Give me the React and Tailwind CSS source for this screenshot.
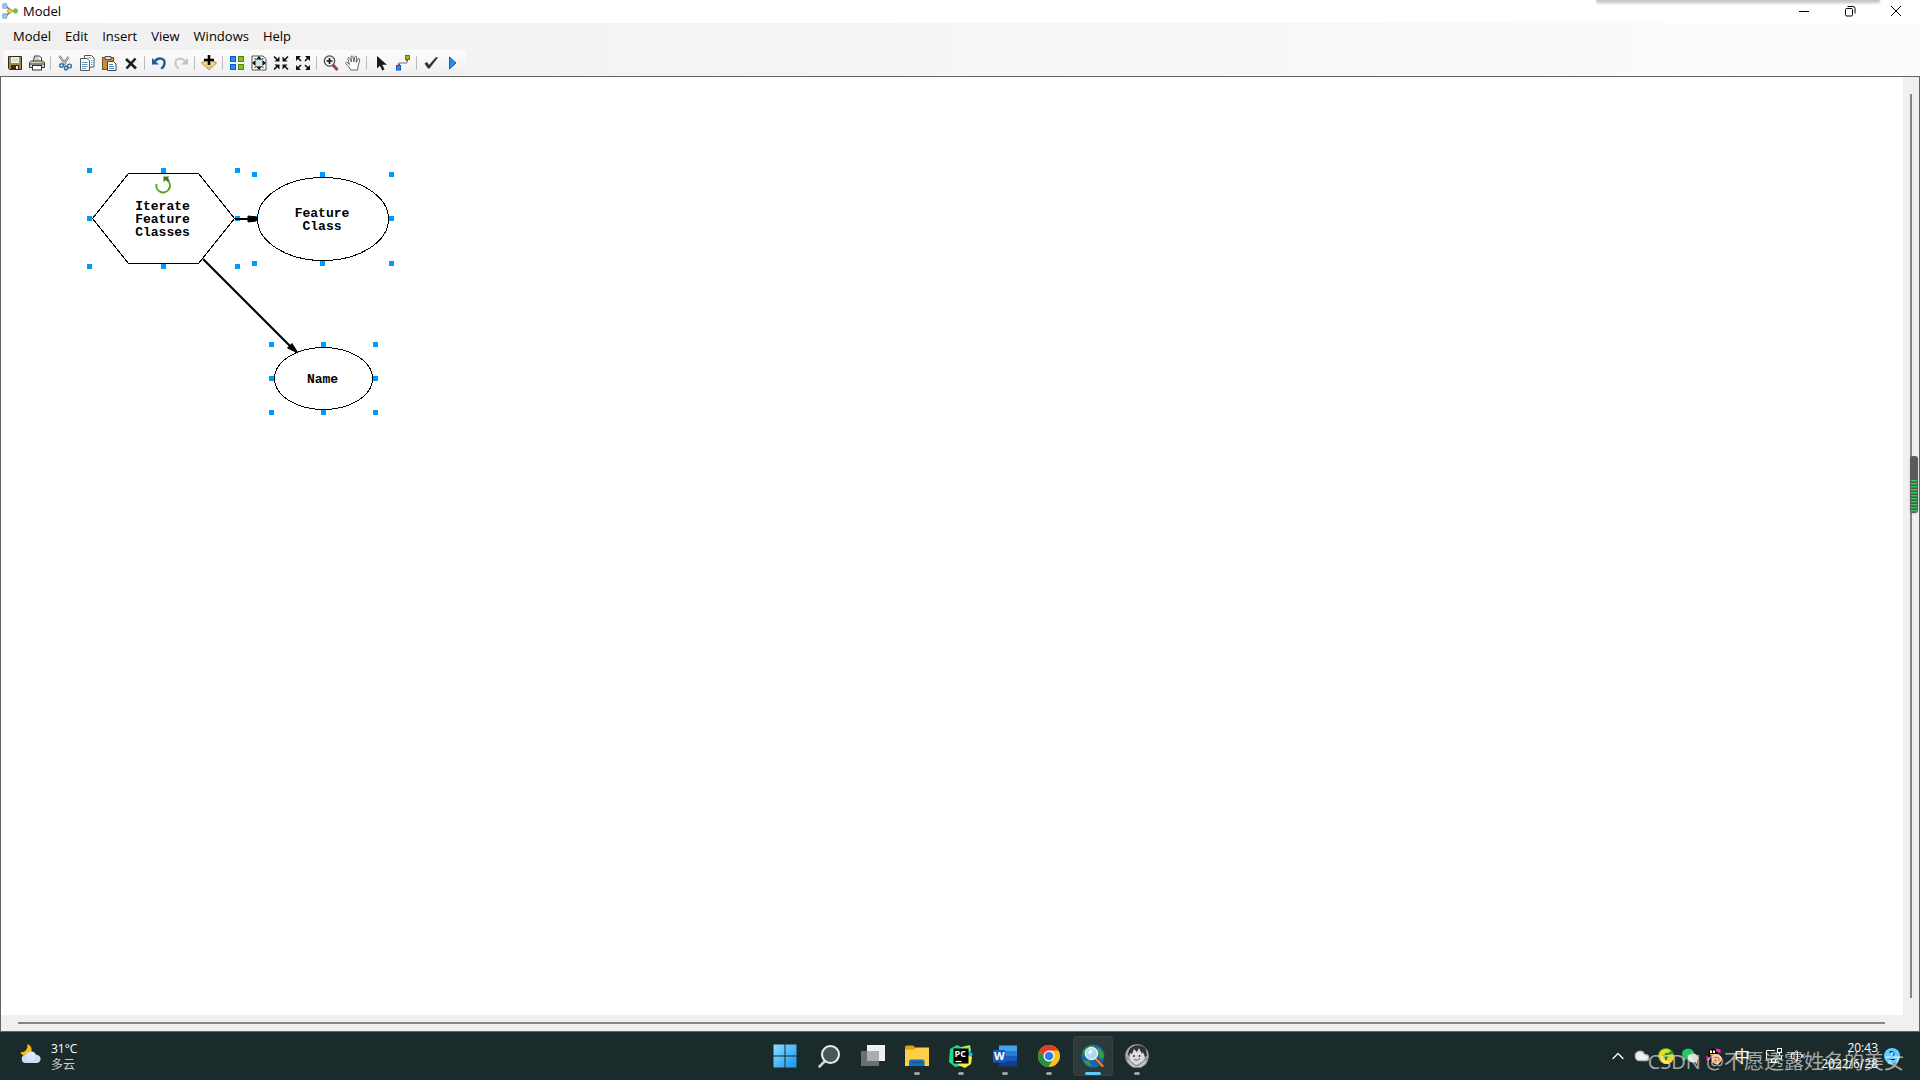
import { Cloud, ChevronUp, VolumeX } from 'lucide-react'

/* ---------- title bar ---------- */

function ModelIcon() {
  return (
    <svg className="h-4 w-4" viewBox="0 0 16 16">
      <path d="M4 3l4 4M4 13l4-4M9 8h3" stroke="#555" strokeWidth="1.2" fill="none" />
      <rect x="0.5" y="0.5" width="4.5" height="5" rx="1" fill="#8fc3f0" stroke="#6ca4d8" strokeWidth="0.6" />
      <rect x="0.5" y="10.5" width="4.5" height="5" rx="1" fill="#8fc3f0" stroke="#6ca4d8" strokeWidth="0.6" />
      <path d="M7.5 5l3.2 3-3.2 3-2.6-3z" fill="#f5c83a" stroke="#b98a12" strokeWidth="0.7" />
      <circle cx="13.5" cy="8" r="2.4" fill="#6cc04a" stroke="#8fcf74" strokeWidth="0.6" />
    </svg>
  )
}

function WindowButton({ label, children }) {
  return (
    <button type="button" aria-label={label} className="flex h-full w-[46px] items-center justify-center pb-0.5">
      <svg className="h-3 w-3" viewBox="0 0 12 12" fill="none" stroke="#000">
        {children}
      </svg>
    </button>
  )
}

function TitleBar() {
  return (
    <header className="relative flex h-[23px] shrink-0 items-center justify-between bg-white">
      <div className="flex items-center gap-[5px] pb-0.5 pl-0.5">
        <ModelIcon />
        <h1 className="text-[13px] leading-4">Model</h1>
      </div>
      {/* edge of a panel docked above the screen */}
      <div className="absolute top-0 right-10 h-0.5 w-[284px] rounded-b bg-[#c8c8c8] shadow-[0_1px_3px_rgba(0,0,0,0.3)]" />
      <div className="flex h-full pr-px">
        <WindowButton label="Minimize">
          <path d="M1 6.5h10" />
        </WindowButton>
        <WindowButton label="Restore">
          <rect x="1.5" y="3.5" width="7" height="7.5" rx="1.2" />
          <path d="M3.5 1.5h5.5a2 2 0 0 1 2 2v5" />
        </WindowButton>
        <WindowButton label="Close">
          <path d="M1 1l10 10M11 1L1 11" />
        </WindowButton>
      </div>
    </header>
  )
}

/* ---------- menu and toolbar ---------- */

const menus = ['Model', 'Edit', 'Insert', 'View', 'Windows', 'Help']

function MenuBar() {
  return (
    <nav className="flex h-[27px] items-center pb-0.5 pl-1.5">
      {menus.map((m) => (
        <button key={m} type="button" className="px-[7px] text-[13px] leading-5">
          {m}
        </button>
      ))}
    </nav>
  )
}

const toolGroups = [
  [
    {
      name: 'Save',
      art: (
        <>
          <path d="M1.5 1.5h13v13h-12l-1-1z" fill="#a08a45" stroke="#2e2a1c" />
          <rect x="4" y="2" width="8" height="6" fill="#f4f4f0" />
          <path d="M5 4h6M5 6h6" stroke="#bbb" strokeWidth="0.7" />
          <rect x="4" y="10" width="8" height="5" fill="#2e2a1c" />
          <rect x="9" y="11" width="2" height="3" fill="#eee" />
        </>
      ),
    },
    {
      name: 'Print',
      art: (
        <>
          <path d="M4.5 6l1-5h5l2 2v3" fill="#fff" stroke="#333" />
          <path d="M6 3h4M6 5h5" stroke="#888" strokeWidth="0.8" />
          <path d="M0.5 7.5l2-1.5h11l2 1.5v5h-15z" fill="#d6d6d6" stroke="#333" />
          <path d="M1 9h14" stroke="#333" />
          <rect x="3.5" y="10.5" width="9" height="4.5" fill="#fff" stroke="#333" />
          <rect x="12" y="7" width="2" height="1" fill="#e0b020" />
        </>
      ),
    },
  ],
  [
    {
      name: 'Cut',
      art: (
        <>
          <path d="M2.5 1l6 8.5M11.5 2L6 9.5" stroke="#777" strokeWidth="2.2" />
          <path d="M2.5 1l6 8.5M11.5 2L6 9.5" stroke="#e8e8e8" strokeWidth="0.8" />
          <circle cx="4.5" cy="10.5" r="1.8" fill="none" stroke="#2f6f9f" strokeWidth="1.4" />
          <ellipse cx="9" cy="13" rx="1.5" ry="2" fill="none" stroke="#2f6f9f" strokeWidth="1.4" />
          <circle cx="12.5" cy="11" r="1.9" fill="none" stroke="#2f6f9f" strokeWidth="1.4" />
        </>
      ),
    },
    {
      name: 'Copy',
      art: (
        <>
          <path d="M5.5 0.5h7l2.5 2.5v9H5.5z" fill="#fff" stroke="#555" />
          <path d="M1.5 3.5H8L10.5 6v9.5h-9z" fill="#fff" stroke="#555" />
          <path d="M3 7.5h5.5M3 9.5h5.5M3 11.5h5.5M3 13.5h4M8 3h4.5M12 5.5h1.5M12 7.5h1.5M12 9.5h1.5" stroke="#5a9cc8" />
        </>
      ),
    },
    {
      name: 'Paste',
      art: (
        <>
          <rect x="1.5" y="2.5" width="11" height="12" fill="#c98a45" stroke="#7d4f1e" />
          <path d="M4 1.5h6v3H4z" fill="#ddd" stroke="#555" />
          <path d="M6.5 6.5h6L15 9v6.5H6.500z" fill="#fff" stroke="#444" />
          <path d="M8 9.5h4M8 11.5h5M8 13.5h5" stroke="#4b92c4" />
        </>
      ),
    },
    { name: 'Delete', art: <path d="M3 4l10 9.5M12.5 3.5l-9 10" stroke="#1c1c1c" strokeWidth="2.6" fill="none" /> },
  ],
  [
    {
      name: 'Undo',
      art: (
        <>
          <path d="M3.500 6.500c4-5 10.500-3 10 1.500 0 3-1.500 4.500-3.500 5.500" fill="none" stroke="#1f5f9e" strokeWidth="2.4" />
          <path d="M1 3v6.5h7z" fill="#1f5f9e" />
        </>
      ),
    },
    {
      name: 'Redo',
      art: (
        <>
          <path d="M12.500 6.500c-4-5-10.500-3-10 1.500 0 3 1.500 4.500 3.500 5.500" fill="none" stroke="#c8c8c8" strokeWidth="2" />
          <path d="M15 3v6.5H8z" fill="#c2c2c2" />
        </>
      ),
    },
  ],
  [
    {
      name: 'Add Data',
      art: (
        <>
          <path d="M0.5 8L8 3.500 15.5 8 8 15z" fill="#f4d684" stroke="#a8834a" />
          <path d="M0.5 8L8 12l7.5-4L8 15z" fill="#e8bb6a" />
          <path d="M8 0v10M3 5h10" stroke="#000" strokeWidth="2.6" />
        </>
      ),
    },
  ],
  [
    {
      name: 'Auto Layout',
      art: (
        <>
          <rect x="1.5" y="1.5" width="5" height="5" fill="#2a8cff" stroke="#0b58c8" />
          <rect x="9.5" y="1.5" width="5" height="5" fill="#8cc21a" stroke="#55820c" />
          <rect x="1.5" y="9.5" width="5" height="5" fill="#2a8cff" stroke="#0b58c8" />
          <rect x="9.5" y="9.5" width="5" height="5" fill="#8cc21a" stroke="#55820c" />
        </>
      ),
    },
    {
      name: 'Full Extent',
      art: (
        <>
          <path d="M1 1h11l3 3v11H1z" fill="#fff" stroke="#555" />
          <circle cx="8" cy="8" r="4.5" fill="#cfe6f2" />
          <path d="M8 1l3 3.500H5zM8 15l3-3.500H5zM1 8l3.500-3v6zM15 8l-3.500-3v6z" fill="#111" />
          <path d="M3.5 3.5l2 1M12.5 3.5l-2 1M3.5 12.5l2-1M12.5 12.5l-2-1" stroke="#111" />
        </>
      ),
    },
    {
      name: 'Fixed Zoom In',
      art: (
        <>
          <path d="M1 1.500l4 4M15 1.500l-4 4M1 14.500l4-4M15 14.500l-4-4" stroke="#111" strokeWidth="1.6" />
          <path d="M6.500 1.500v5h-5zM9.500 1.500v5h5zM6.500 14.500v-5h-5zM9.500 14.500v-5h5z" fill="#111" />
        </>
      ),
    },
    {
      name: 'Fixed Zoom Out',
      art: (
        <>
          <path d="M2 2l4 4M14 2l-4 4M2 14l4-4M14 14l-4-4" stroke="#111" strokeWidth="1.6" />
          <path d="M1 1h5L1 6zM15 1h-5l5 5zM1 15h5l-5-5zM15 15h-5l5-5z" fill="#111" />
        </>
      ),
    },
  ],
  [
    {
      name: 'Zoom In',
      art: (
        <>
          <path d="M10 10l4.500 5" stroke="#8a4b3a" strokeWidth="3" />
          <circle cx="6.5" cy="6" r="5.2" fill="#eef4f7" stroke="#444" strokeWidth="1.2" />
          <path d="M6.500 3v6M3.500 6h6" stroke="#111" strokeWidth="1.6" />
        </>
      ),
    },
    {
      name: 'Pan',
      art: (
        <path
          d="M5.500 15L4 12 0.800 8.500c-.4-1.500 1-1.700 2-.6L4.500 9.500 2.800 3.500c0-1.300 1.400-1.300 1.800-.2L6.500 7 6 1.800c.2-1.300 1.700-1.300 2 0L8.800 7l1-5c.4-1.200 1.800-1 1.800.3L11.200 7.500l1.800-3.500c.8-1 2-.4 1.700.8L13.200 11l-.7 4z"
          fill="#fff"
          stroke="#555"
          strokeWidth="0.9"
        />
      ),
    },
  ],
  [
    { name: 'Select', art: <path d="M4 1v12.5l3-2.700 2.200 4.700 2.300-1-2.200-4.700H14z" fill="#1a1a1a" /> },
    {
      name: 'Connect',
      art: (
        <>
          <path d="M3.500 10V8H12V5" fill="none" stroke="#777" />
          <rect x="1.5" y="10.5" width="4" height="4.5" fill="#2a8cff" stroke="#0b58c8" />
          <rect x="10.5" y="0.5" width="4" height="4" fill="#8cc21a" stroke="#55820c" />
          <path d="M3 9.500h2M11 5.500h2" stroke="#e02020" />
        </>
      ),
    },
  ],
  [
    { name: 'Validate Entire Model', art: <path d="M1.500 8.500L4 7l2 3 7-8 2 .5-8.500 11H5z" fill="#333" /> },
    { name: 'Run', art: <path d="M4.500 2l6.500 6-6.500 6z" fill="#2a8cf0" stroke="#0f5fb8" /> },
  ],
]

function Toolbar() {
  return (
    <div
      role="toolbar"
      aria-label="Standard"
      className="ml-[3px] flex h-[25px] w-fit items-center rounded bg-linear-to-b from-[#fcfcfc] to-[#f0f0f0] pr-0.5 pl-px"
    >
      {toolGroups.map((group, i) => (
        <div key={group[0].name} className="flex items-center">
          {i > 0 && <span className="mr-[3px] ml-0.5 h-3.5 w-px bg-[#bdbdbd]" />}
          {group.map((tool) => (
            <button key={tool.name} type="button" aria-label={tool.name} className="flex h-[22px] w-[22px] items-center justify-center">
              <svg className="h-4 w-4" viewBox="0 0 16 16">
                {tool.art}
              </svg>
            </button>
          ))}
        </div>
      ))}
    </div>
  )
}

/* ---------- model diagram ---------- */

const nodes = [
  { id: 'iterate', shape: 'hexagon', x: 86, y: 91, w: 153, h: 101, lines: ['Iterate', 'Feature', 'Classes'] },
  { id: 'feature', shape: 'ellipse', x: 251, y: 95, w: 142, h: 94, lines: ['Feature', 'Class'] },
  { id: 'name', shape: 'ellipse', x: 268, y: 265, w: 109, h: 73, lines: ['Name'] },
]

function Handles({ w, h }) {
  const xs = [0, Math.floor((w - 5) / 2), w - 5]
  const ys = [0, Math.floor((h - 5) / 2), h - 5]
  return xs.flatMap((x, i) =>
    ys.map((y, j) => (i === 1 && j === 1 ? null : <rect key={`${i}${j}`} x={x} y={y} width="5" height="5" fill="#0099ff" />))
  )
}

function Node({ node }) {
  const { shape, x, y, w, h, lines } = node
  return (
    <div className="absolute flex items-center justify-center pt-0.5 pr-0.5" style={{ left: x, top: y, width: w, height: h }}>
      <svg className="absolute inset-0 h-full w-full" shapeRendering="crispEdges">
        <Handles w={w} h={h} />
        {shape === 'hexagon' ? (
          <polygon points={`5.5,${h / 2} 41.5,5.5 ${w - 41.5},5.5 ${w - 5.5},${h / 2} ${w - 41.5},${h - 5.5} 41.5,${h - 5.5}`} fill="#fff" stroke="#000" />
        ) : (
          <ellipse cx={w / 2} cy={h / 2} rx={w / 2 - 5.5} ry={h / 2 - 5.5} fill="#fff" stroke="#000" />
        )}
      </svg>
      {shape === 'hexagon' && (
        <svg className="absolute top-2 left-[67px] h-[18px] w-[18px]" viewBox="0 0 18 18">
          <path d="M2.500 8a6.800 6.800 0 1 0 10.500-4" fill="none" stroke="#5f9c28" strokeWidth="2" />
          <path d="M9.500 0.500h6l-1.500 1.500 1.500 2.500-2 1-1.500-1.500-2.500 2z" fill="#3f7a1a" />
        </svg>
      )}
      <p className="relative text-center font-['Liberation_Mono',monospace] text-[13px] leading-[13px] font-bold">
        {lines.map((line) => (
          <span key={line} className="block">
            {line}
          </span>
        ))}
      </p>
    </div>
  )
}

function Canvas() {
  return (
    <main className="relative min-w-0 flex-1 overflow-hidden bg-white">
      {nodes.map((n) => (
        <Node key={n.id} node={n} />
      ))}
      <svg className="absolute top-0 left-0 h-[400px] w-[400px]">
        <path d="M234 142h14M202 182l88 88" stroke="#000" strokeWidth="2" />
        <path d="M247 139l8 1 2 2-2 2-8 1z" fill="#000" stroke="#000" />
        <path d="M286.500 271l4.500-4.500 6 9.500z" fill="#000" stroke="#000" />
      </svg>
    </main>
  )
}

function Workspace() {
  return (
    <section className="flex min-h-0 flex-1 flex-col border border-[#646464] bg-[#f0f0f0]">
      <div className="flex min-h-0 flex-1">
        <Canvas />
        <div className="relative flex w-4 justify-center py-[17px]">
          <div className="w-0.5 bg-[#858585]" />
          {/* floating memory gauge */}
          <div className="absolute top-[379px] right-px flex h-[57px] w-2 flex-col justify-end rounded-[3px] bg-[#5a5a5a] p-px shadow-sm">
            <div className="h-8 bg-[repeating-linear-gradient(to_bottom,#2fd05a_0px,#2fd05a_1px,#3f8a52_1px,#3f8a52_2px,#4a5a4e_2px,#4a5a4e_3px)]" />
          </div>
        </div>
      </div>
      <div className="flex h-4 items-center pr-[34px] pl-[17px]">
        <div className="h-0.5 flex-1 bg-[#858585]" />
      </div>
    </section>
  )
}

/* ---------- taskbar ---------- */

const apps = [
  {
    name: 'Start',
    art: (
      <>
        <defs>
          <linearGradient id="win" x1="0" y1="0" x2="1" y2="1">
            <stop offset="0" stopColor="#8be0ff" />
            <stop offset="1" stopColor="#1493f5" />
          </linearGradient>
        </defs>
        <path d="M0.500 0.500h11v11h-11zM12.500 0.500h11v11h-11zM0.500 12.500h11v11h-11zM12.500 12.500h11v11h-11z" fill="url(#win)" />
      </>
    ),
  },
  {
    name: 'Search',
    art: (
      <>
        <path d="M8.500 16.500l-6 6" stroke="#cfd3d3" strokeWidth="2.6" strokeLinecap="round" />
        <circle cx="13.5" cy="10.5" r="8.5" fill="#4a5758" stroke="#eceeee" strokeWidth="2" />
      </>
    ),
  },
  {
    name: 'Task View',
    art: (
      <>
        <rect x="6" y="1" width="18" height="16" fill="#f0f0f0" />
        <rect x="0" y="7" width="18" height="15" fill="#6a6f6f" />
        <rect x="6" y="7" width="12" height="10" fill="#a9adad" />
      </>
    ),
  },
  {
    name: 'File Explorer',
    running: true,
    art: (
      <>
        <path d="M0 3a1.500 1.500 0 0 1 1.500-1.500H8L11 4v4H0z" fill="#e0a010" />
        <path d="M0 5.500h9l2-2h13V22H0z" fill="#ffce4b" />
        <path d="M4 22v-4.500a2 2 0 0 1 2-2h11.500a2 2 0 0 1 2 2V22z" fill="#1270c0" />
        <path d="M7 18.500h10" stroke="#0b4f90" />
      </>
    ),
  },
  {
    name: 'PyCharm',
    running: true,
    art: (
      <>
        <path d="M1 5l7-4 6 3-3 18-5 1-6-5z" fill="#21d789" />
        <path d="M12 3l9-2 1 6-9 5z" fill="#a4e85a" />
        <path d="M19 6l5 4-3 5z" fill="#07c3f2" />
        <path d="M17 10l6 3-1 7-6 4-7-3z" fill="#f5ee45" />
        <rect x="4.5" y="4.5" width="15" height="15" fill="#000" />
        <text x="5.5" y="12.5" fill="#fff" fontSize="9" fontWeight="700" fontFamily="Open Sans, sans-serif">
          PC
        </text>
        <path d="M6.500 17.500h6" stroke="#fff" strokeWidth="1.2" />
      </>
    ),
  },
  {
    name: 'Word',
    running: true,
    art: (
      <>
        <path d="M6 1.500h18V7H6z" fill="#41a5ee" />
        <path d="M6 7h18v5H6z" fill="#2b7cd3" />
        <path d="M6 12h18v5H6z" fill="#185abd" />
        <path d="M6 17h18v5.500H6z" fill="#103f91" />
        <rect x="0" y="6" width="12.5" height="12.5" rx="1" fill="#185abd" />
        <text x="1" y="16" fill="#fff" fontSize="11" fontWeight="700" fontFamily="Open Sans, sans-serif">
          W
        </text>
      </>
    ),
  },
  {
    name: 'Chrome',
    running: true,
    art: (
      <>
        <circle cx="12" cy="12" r="11" fill="#fbc116" />
        <path d="M2.500 6.500A11 11 0 0 0 11.500 23L16.500 14.500 12 12 7 14z" fill="#229342" />
        <path d="M12 6.500h9.500A11 11 0 0 0 2.500 6.500L7.200 14.500z" fill="#e33b2e" />
        <circle cx="12" cy="12" r="5.5" fill="#fff" />
        <circle cx="12" cy="12" r="4.3" fill="#2b7de9" />
      </>
    ),
  },
  {
    name: 'ArcMap',
    running: true,
    active: true,
    art: (
      <>
        <circle cx="12" cy="12" r="11.5" fill="#1468b0" />
        <path d="M2 7c3-5 9-6 12-5l-4 4-3 4-4 2zM16 3c4 2 7 5 7 10l-4 2-2-5zM3 16l5 1 3 5c-4 0-7-2-8-6z" fill="#3a9a45" />
        <path d="M14.500 14.500l7 7.500" stroke="#6b3116" strokeWidth="3.5" strokeLinecap="round" />
        <path d="M14.500 14.500l7 7.500" stroke="#e58c45" strokeWidth="2" strokeLinecap="round" />
        <circle cx="10.5" cy="9.5" r="6" fill="#a9d8f3" stroke="#e9eef0" strokeWidth="1.5" />
        <path d="M7 8.500a4 4 0 0 1 5-2.500l-3 5z" fill="#f3fbff" />
      </>
    ),
  },
  {
    name: 'Viewer',
    running: true,
    art: (
      <>
        <circle cx="12" cy="12" r="11.8" fill="#a9a9a9" />
        <path d="M4 8l1 8 6 5 7-4 3-8-5-6H8z" fill="#dcdcdc" />
        <path d="M4 6c3-5 12-7 17-1l1 7-2 1-2-5-1 2-3-6-2 4-3-3-2 5-2-1-1 4-1-3z" fill="#333" />
        <path d="M1 13l7 7 4 2 5-3 5-5-1 6-5 3.500H8L3 19z" fill="#c6c6c6" stroke="#777" strokeWidth="0.7" />
        <circle cx="9" cy="12" r="0.9" fill="#222" />
        <circle cx="14.5" cy="12" r="0.9" fill="#222" />
        <path d="M9 15.500q3 2 6-1" stroke="#555" strokeWidth="0.9" fill="none" />
      </>
    ),
  },
]

function TaskButton({ app }) {
  return (
    <button
      type="button"
      aria-label={app.name}
      className={`flex h-10 w-10 flex-col items-center justify-end rounded pb-px ${app.active ? 'bg-[#2c3a3a] ring-1 ring-[#344242] ring-inset' : ''}`}
    >
      <svg className="mb-1 h-6 w-6 shrink-0" viewBox="0 0 24 24">
        {app.art}
      </svg>
      <span
        className={`h-[3px] rounded-full ${app.active ? 'w-4 bg-[#5fc8f8]' : app.running ? 'w-1.5 bg-[#9aa0a0]' : 'w-1.5'}`}
      />
    </button>
  )
}

function Weather() {
  return (
    <button type="button" className="flex items-center gap-[9px] pt-0.5 pl-5 text-left">
      <svg className="mb-1.5 h-[22px] w-[22px]" viewBox="0 0 22 22">
        <path d="M7.500 1C13 3 13 11 8 12.500 4 13.500 1 11.500 0.500 9 5 10 8 6 7.500 1z" fill="#fdb913" />
        <path d="M6 20a4 4 0 0 1-.5-8A5.500 5.500 0 0 1 15.500 12 4 4 0 0 1 17.500 20z" fill="#cfdcf4" />
        <circle cx="11.5" cy="13" r="4.5" fill="#dde7f8" />
      </svg>
      <span className="flex flex-col text-xs leading-4">
        <span className="text-white">31°C</span>
        <span className="text-[#c8cecd]">多云</span>
      </span>
    </button>
  )
}

function Tray() {
  return (
    <div className="relative flex h-full items-center justify-end pr-5 text-white">
      <button type="button" aria-label="Show hidden icons" className="mr-1.5">
        <ChevronUp className="h-5 w-5" strokeWidth={1.5} />
      </button>
      <div className="flex items-center gap-2">
        <Cloud className="h-4 w-4" fill="#f0f0f0" stroke="#b4b8b8" />
        <svg className="h-4 w-4" viewBox="0 0 16 16">
          <circle cx="8" cy="8" r="8" fill="#249b3a" />
          <path d="M1 9a7 7 0 0 1 12-6L4 8l11-2a7 7 0 0 1-13 6z" fill="#f6d51f" />
          <path d="M8 5v7M5 8.500h6" stroke="#1d8a34" strokeWidth="2" />
        </svg>
        <svg className="h-4 w-4" viewBox="0 0 16 16">
          <ellipse cx="6" cy="6" rx="6" ry="5.5" fill="#27c468" />
          <path d="M1.500 9v4l3-2z" fill="#27c468" />
          <ellipse cx="11" cy="10" rx="5" ry="4.5" fill="#dcdcdc" />
          <path d="M12 13l3 3v-5z" fill="#dcdcdc" />
        </svg>
        <svg className="h-4 w-4" viewBox="0 0 16 16">
          <path d="M2.500 8C1.500-1.500 12.500-1.500 12 7v7H3z" fill="#000" />
          <path d="M0 8l3 1 1 3-3 1zM9.500 0.500l5 1v4l-4-2z" fill="#ff1fd0" />
          <path d="M4 2.500h2v2.500H4zM7 2.500h2v2.500H7z" fill="#fff" />
          <path d="M4 6h5v1.500H4z" fill="#f5b020" />
          <circle cx="10.5" cy="11" r="4.6" fill="#f7a05c" stroke="#fbe3d0" />
          <circle cx="10.5" cy="11" r="1.8" fill="none" stroke="#d45421" />
        </svg>
      </div>
      <span className="ml-3 text-base leading-5">中</span>
      <svg className="ml-4 h-4 w-4" viewBox="0 0 16 16" fill="none" stroke="#fff">
        <path d="M9 2.500H0.500V11h15V8M3.500 14.500h8M5.500 11v3M9.500 11v3" />
        <rect x="11.5" y="0.5" width="4" height="4" />
        <path d="M13.500 4.500v3" />
      </svg>
      <VolumeX className="ml-2 h-4 w-4" strokeWidth={1.5} />
      <div className="ml-3.5 flex w-[58px] flex-col text-right text-xs leading-4">
        <time>20:43</time>
        <time>2022/6/28</time>
      </div>
      <span className="ml-1.5 flex h-4 w-4 items-center justify-center rounded-full bg-[#60cdff] text-xs leading-4 text-black">2</span>
      <p className="absolute right-4 bottom-1 text-xl leading-7 whitespace-nowrap text-white/60">CSDN @不愿透露姓名的美女</p>
    </div>
  )
}

function Taskbar() {
  return (
    <footer className="grid h-12 shrink-0 grid-cols-[1fr_auto_1fr] items-center bg-[#1b2b2b]">
      <Weather />
      <div className="flex gap-1 pl-0.5">
        {apps.map((app) => (
          <TaskButton key={app.name} app={app} />
        ))}
      </div>
      <Tray />
    </footer>
  )
}

export default function App() {
  return (
    <div className="flex h-screen flex-col overflow-hidden bg-white font-['Open_Sans','Noto_Sans_CJK_SC',sans-serif] text-black">
      <TitleBar />
      <div className="h-[53px] shrink-0 bg-linear-to-r from-[#f0f0f0] to-[#fcfcfc]">
        <MenuBar />
        <Toolbar />
      </div>
      <Workspace />
      <Taskbar />
    </div>
  )
}
